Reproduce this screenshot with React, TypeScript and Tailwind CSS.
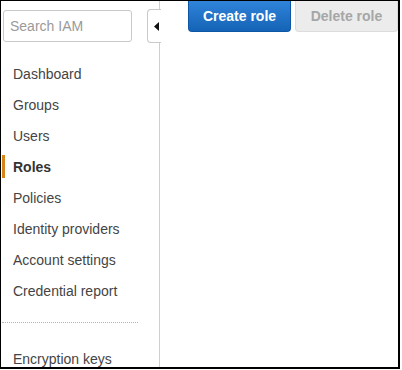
import React from "react";

const items = [
  "Dashboard",
  "Groups",
  "Users",
  "Roles",
  "Policies",
  "Identity providers",
  "Account settings",
  "Credential report",
];

function NavItem({ label, active }: { label: string; active?: boolean }) {
  return (
    <div className="h-[31px] flex items-center ml-[1px]">
      <div
        className={
          "h-[23px] flex items-center pl-[8px] border-l-[3px] " +
          (active ? "border-[#d7841d] font-bold text-[#333]" : "border-transparent text-[#444]")
        }
      >
        {label}
      </div>
    </div>
  );
}

export default function App() {
  return (
    <div className="w-[400px] h-[369px] border-l border-t border-r-2 border-b-2 border-black bg-white flex overflow-hidden font-['Liberation_Sans',Arial,sans-serif] text-[14px] leading-none">
      <aside className="w-[159px] shrink-0 border-r border-[#cfcfcf] relative">
        <div className="ml-[2px] mt-[9px] w-[129px] h-[32px] border border-[#c9c9c9] rounded-[3px] flex items-center pl-[6px] text-[#9a9a9a]">
          Search IAM
        </div>
        <div className="absolute left-[146px] top-[8px] w-[14px] h-[34px] bg-white border border-r-0 border-[#c9c9c9] rounded-l-[4px] flex items-center justify-end pr-[2px]">
          <svg width="5" height="9" viewBox="0 0 5 9">
            <path d="M5 0 L0 4.5 L5 9 Z" fill="#111" />
          </svg>
        </div>
        <div className="mt-[16px]">
          {items.map((l) => (
            <NavItem key={l} label={l} active={l === "Roles"} />
          ))}
        </div>
        <div className="ml-[1px] w-[136px] mt-[16px] border-t border-dotted border-[#b5b5b5]" />
        <div className="mt-[20px]">
          <NavItem label="Encryption keys" />
        </div>
      </aside>
      <main className="flex-1 pl-[28px] flex items-start gap-[4px]">
        <button className="w-[103px] h-[31px] rounded-b-[4px] border border-t-0 border-[#0d56a3] bg-gradient-to-b from-[#2f84da] to-[#1463b6] text-white font-bold text-[14px]">
          Create role
        </button>
        <button className="w-[103px] h-[31px] rounded-b-[4px] border border-t-0 border-[#dcdcdc] bg-[#ececec] text-[#a6a6a6] font-bold text-[14px]">
          Delete role
        </button>
      </main>
    </div>
  );
}
